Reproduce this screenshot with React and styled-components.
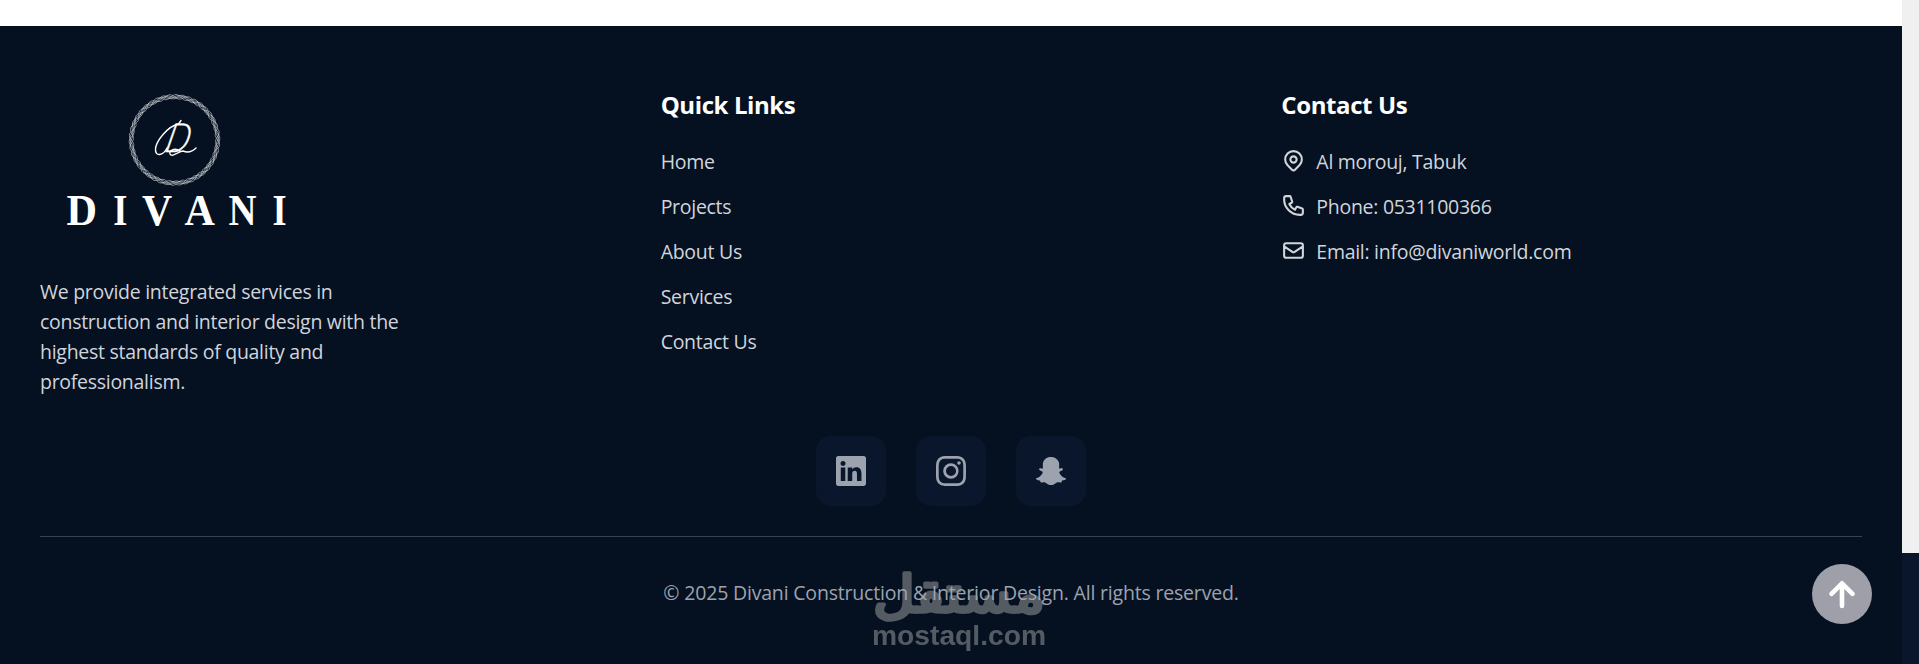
import React from 'react';
import styled, { createGlobalStyle } from 'styled-components';
import { HiOutlineLocationMarker, HiOutlinePhone, HiOutlineMail } from 'react-icons/hi';
import { BsLinkedin, BsInstagram } from 'react-icons/bs';
import { FaSnapchatGhost } from 'react-icons/fa';

const colors = {
    navy: '#051121',
    tile: '#09162b',
    text: '#d1d5db',
    muted: '#9ca3af',
    line: '#364153',
};

const quickLinks = ['Home', 'Projects', 'About Us', 'Services', 'Contact Us'];

const contacts = [
    { icon: HiOutlineLocationMarker, label: 'Al morouj, Tabuk' },
    { icon: HiOutlinePhone, label: 'Phone: 0531100366' },
    { icon: HiOutlineMail, label: 'Email: info@divaniworld.com' },
];

const socials = [
    { name: 'LinkedIn', icon: BsLinkedin },
    { name: 'Instagram', icon: BsInstagram },
    { name: 'Snapchat', icon: FaSnapchatGhost },
];

const GlobalStyle = createGlobalStyle`
    * { box-sizing: border-box; }
    body {
        margin: 0;
        overflow: hidden;
        background: #fff;
        font-family: "Open Sans", "Noto Sans", sans-serif;
    }
`;

const Page = styled.div`
    display: flex;
    height: 664px;
`;

const Main = styled.div`
    flex: 1;
    display: flex;
    flex-direction: column;
    padding-top: 26px;
`;

const ScrollTrack = styled.div`
    width: 17px;
    padding-top: 553px;
    background: #f0f0f0;
`;

const ScrollThumb = styled.div`
    height: 111px;
    background: ${colors.tile};
`;

const FooterContainer = styled.footer`
    flex: 1;
    padding: 60px 40px 0;
    background: ${colors.navy};
    color: ${colors.text};
    font-size: 19.5px;
    letter-spacing: -0.28px;
    line-height: 30px;
`;

const Columns = styled.div`
    display: grid;
    grid-template-columns: repeat(3, 1fr);
    gap: 40px;
`;

const Logo = styled.svg`
    display: block;
    width: 270px;
    height: 160px;
    margin-bottom: 31px;
    letter-spacing: 0;
`;

const About = styled.p`
    max-width: 375px;
    margin: 0;
`;

const Heading = styled.h3`
    margin: 0 0 24px;
    padding-top: 1px;
    color: #fff;
    font-size: 24px;
    font-weight: 700;
    letter-spacing: -0.4px;
    line-height: 36px;
`;

const List = styled.ul`
    display: grid;
    gap: 15px;
    margin: 0;
    padding: 0;
    list-style: none;
`;

const Item = styled.li`
    display: flex;
    gap: 10px;

    svg {
        width: 25px;
        height: 25px;
        margin-top: 1px;
    }
`;

const SocialContainer = styled.div`
    display: flex;
    justify-content: center;
    gap: 30px;
    margin: 39px 0 30px;
`;

const SocialLink = styled.a`
    display: grid;
    place-items: center;
    width: 70px;
    height: 70px;
    border-radius: 15px;
    background: ${colors.tile};
    color: ${colors.muted};

    svg {
        width: 30px;
        height: 30px;
    }
`;

const Copyright = styled.div`
    padding-top: 41px;
    border-top: 1px solid ${colors.line};
    color: ${colors.muted};
    letter-spacing: -0.19px;
    text-align: center;
`;

const TopButton = styled.button`
    position: fixed;
    right: 47px;
    bottom: 40px;
    width: 60px;
    height: 60px;
    padding: 0;
    border: 0;
    border-radius: 50%;
    background: #9f9fa9;

    svg { display: block; }
`;

const Watermark = styled.svg`
    position: fixed;
    left: 866px;
    top: 550px;
    width: 186px;
    height: 114px;
    opacity: 0.5;
    pointer-events: none;
`;

// one strand of the braided ring
const strand = (phase, amp) => {
    const points = [];
    for (let a = 0; a <= 360; a += 2) {
        const t = (a * Math.PI) / 180;
        const r = 43.2 + amp * Math.sin(14 * t + phase);
        points.push(`${(174.5 + r * Math.cos(t)).toFixed(2)},${(139.9 + r * Math.sin(t)).toFixed(2)}`);
    }
    return points.join(' ');
};

const strands = [[0, 2.2], [2.1, 2.2], [4.2, 2.2], [1, 1.4], [3.1, 1.4]];

const letters = [
    { char: 'D', x: 66.4, width: 30.5 },
    { char: 'I', x: 113.3, width: 14.1 },
    { char: 'V', x: 142, width: 30.2 },
    { char: 'A', x: 184.5, width: 30.4 },
    { char: 'N', x: 228.6, width: 28 },
    { char: 'I', x: 272.6, width: 14.1 },
];

const DivaniLogo = () => (
    <Logo viewBox="40 86 270 160" role="img" aria-label="Divani">
        <g fill="none" stroke="#dfe3e8" strokeWidth="0.55">
            {strands.map(([phase, amp], i) => <polyline key={i} points={strand(phase, amp)} />)}
        </g>
        <g transform="translate(163.5 152) skewX(-14)">
            <text fill="#fff" stroke="#fff" strokeWidth="0.4" fontFamily="Lato, sans-serif" fontStyle="italic" fontWeight="300" fontSize="40" textLength="24" lengthAdjust="spacingAndGlyphs">D</text>
        </g>
        <g fill="none" stroke="#fff" strokeWidth="1.4" strokeLinecap="round">
            <path d="M181 120.500L178.500 124C168 126 156 141 155.500 149C155 157 163 156 167 148" />
            <path d="M180 151C174 147 169 151 170 154C172 158 179 151 183 151C188 153 193 151 196 148" />
        </g>
        <g fill="#fff" fontFamily="Liberation Serif, serif" fontWeight="700" fontSize="45">
            {letters.map(({ char, x, width }, i) => (
                <text key={i} x={x} y="224.7" textLength={width} lengthAdjust="spacingAndGlyphs">{char}</text>
            ))}
        </g>
    </Logo>
);

const App = () => (
    <Page>
        <GlobalStyle />
        <Main>
            <FooterContainer>
                <Columns>
                    <div>
                        <DivaniLogo />
                        <About>
                            We provide integrated services in construction and interior design with the
                            highest standards of quality and professionalism.
                        </About>
                    </div>
                    <div>
                        <Heading>Quick Links</Heading>
                        <List>
                            {quickLinks.map(link => <Item key={link}>{link}</Item>)}
                        </List>
                    </div>
                    <div>
                        <Heading>Contact Us</Heading>
                        <List>
                            {contacts.map(({ icon: Icon, label }) => (
                                <Item key={label}>
                                    <Icon />
                                    <span>{label}</span>
                                </Item>
                            ))}
                        </List>
                    </div>
                </Columns>

                <SocialContainer>
                    {socials.map(({ name, icon: Icon }) => (
                        <SocialLink key={name} aria-label={name}>
                            <Icon />
                        </SocialLink>
                    ))}
                </SocialContainer>

                <Copyright>© 2025 Divani Construction &amp; Interior Design. All rights reserved.</Copyright>
            </FooterContainer>
        </Main>
        <ScrollTrack>
            <ScrollThumb />
        </ScrollTrack>

        <Watermark viewBox="866 550 186 114">
            <g fill="#a5a5a5" stroke="#a5a5a5">
                <text x="873" y="612" fontFamily="DejaVu Sans, sans-serif" fontSize="51" strokeWidth="3.6" strokeLinejoin="round" textLength="172" lengthAdjust="spacingAndGlyphs">مستقل</text>
                <text x="872" y="644.7" fontFamily="Liberation Sans, sans-serif" fontWeight="700" fontSize="28" strokeWidth="0" textLength="174" lengthAdjust="spacingAndGlyphs">mostaql.com</text>
            </g>
        </Watermark>

        <TopButton aria-label="Back to top">
            <svg width="60" height="60" fill="none" stroke="#fff" strokeWidth="4.6" strokeLinecap="round" strokeLinejoin="round">
                <path d="M30 42V19.500M19.500 29.800L30 19.300L40.500 29.800" />
            </svg>
        </TopButton>
    </Page>
);

export default App;
